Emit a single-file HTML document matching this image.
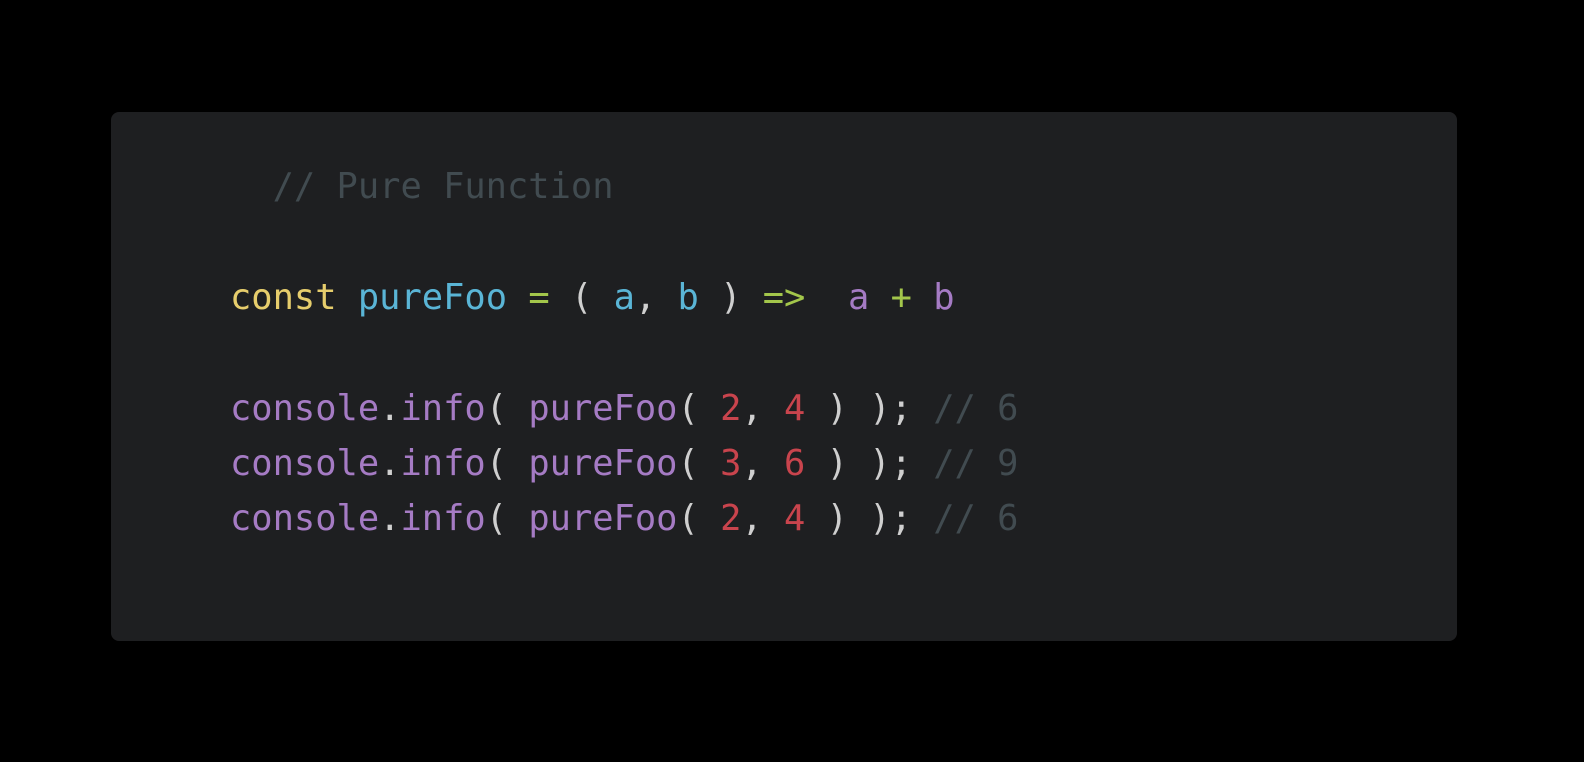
<!DOCTYPE html>
<html><head><style>
html,body{margin:0;padding:0;background:#000;width:1584px;height:762px;overflow:hidden}
.card{position:absolute;left:111px;top:112px;width:1346px;height:529px;background:#1e1f21;border-radius:8px}
pre{position:absolute;left:230px;top:159px;margin:0;font-family:"DejaVu Sans Mono","Liberation Mono",monospace;font-size:35.4px;line-height:55.4px;color:#cfcfcf}
.c{color:#414b50}.k{color:#e6cd6c}.b{color:#5ab5d6}.g{color:#a3c64b}.p{color:#a57bc4}.n{color:#c9444d}.w{color:#cfcfcf}
</style></head><body>
<div class="card"></div>
<pre><span class="c">  // Pure Function</span>

<span class="k">const</span> <span class="b">pureFoo</span> <span class="g">=</span> ( <span class="b">a</span>, <span class="b">b</span> ) <span class="g">=&gt;</span>  <span class="p">a</span> <span class="g">+</span> <span class="p">b</span>

<span class="p">console</span>.<span class="p">info</span>( <span class="p">pureFoo</span>( <span class="n">2</span>, <span class="n">4</span> ) ); <span class="c">// 6</span>
<span class="p">console</span>.<span class="p">info</span>( <span class="p">pureFoo</span>( <span class="n">3</span>, <span class="n">6</span> ) ); <span class="c">// 9</span>
<span class="p">console</span>.<span class="p">info</span>( <span class="p">pureFoo</span>( <span class="n">2</span>, <span class="n">4</span> ) ); <span class="c">// 6</span></pre>
</body></html>
